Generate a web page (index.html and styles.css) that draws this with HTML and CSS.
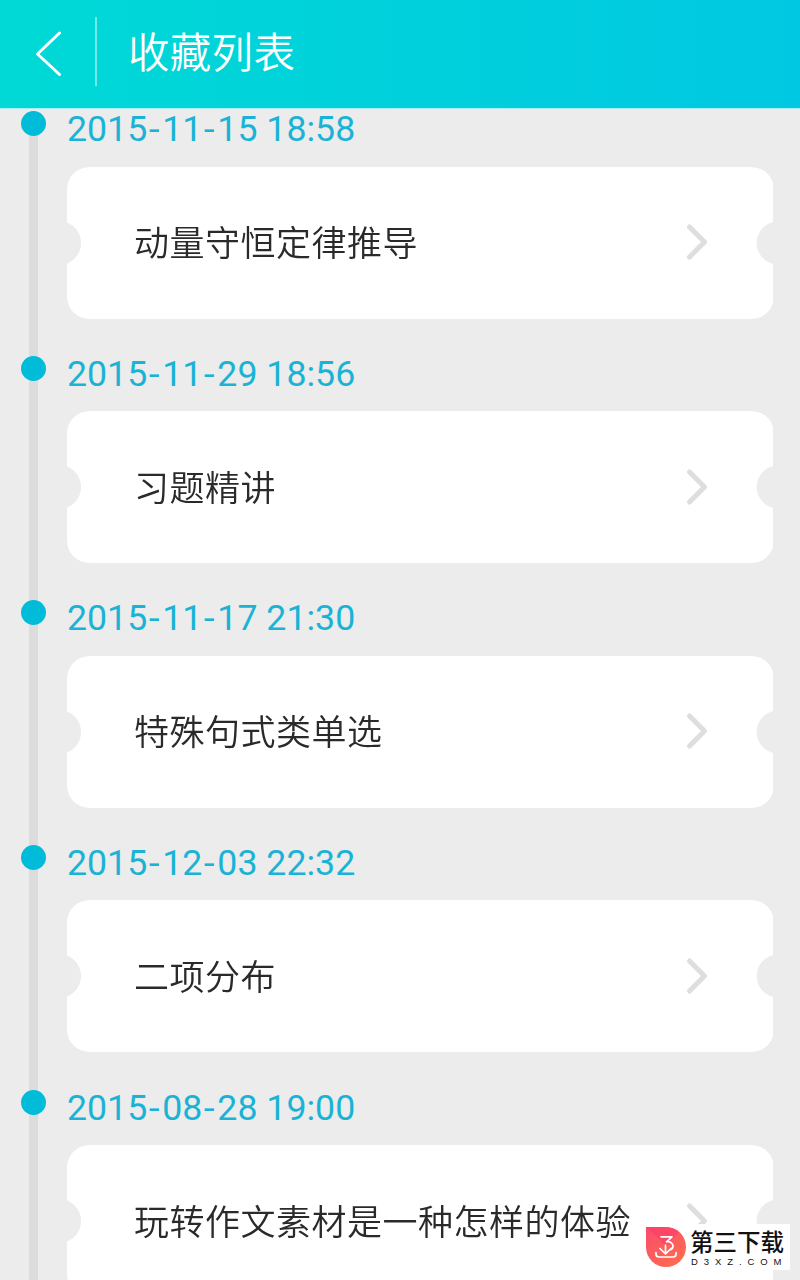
FILE: index.html
```html
<!DOCTYPE html>
<html lang="zh-CN">
<head>
<meta charset="utf-8">
<title>收藏列表</title>
<link rel="stylesheet" href="styles.css">
</head>
<body>
<div class="screen">
  <header class="bar">
    <svg class="back" width="28" height="48" viewBox="0 0 28 48"><path d="M25.500 5 3.500 26 25.500 46.500"/></svg>
    <span class="divider"></span>
    <h1 class="title">收藏列表</h1>
  </header>
  <main class="list">
    <section class="item">
      <div class="rail"><i class="dot"></i></div>
      <div class="entry">
        <time class="date">2015<span class="dash">-</span>11<span class="dash">-</span>15 18:58</time>
        <a class="card"><span class="name">动量守恒定律推导</span><svg class="chevron" width="24" height="38" viewBox="0 0 24 38"><path d="M4.500 4 19.500 19 4.500 34"/></svg></a>
      </div>
    </section>
    <section class="item">
      <div class="rail"><i class="dot"></i></div>
      <div class="entry">
        <time class="date">2015<span class="dash">-</span>11<span class="dash">-</span>29 18:56</time>
        <a class="card"><span class="name">习题精讲</span><svg class="chevron" width="24" height="38" viewBox="0 0 24 38"><path d="M4.500 4 19.500 19 4.500 34"/></svg></a>
      </div>
    </section>
    <section class="item">
      <div class="rail"><i class="dot"></i></div>
      <div class="entry">
        <time class="date">2015<span class="dash">-</span>11<span class="dash">-</span>17 21:30</time>
        <a class="card"><span class="name">特殊句式类单选</span><svg class="chevron" width="24" height="38" viewBox="0 0 24 38"><path d="M4.500 4 19.500 19 4.500 34"/></svg></a>
      </div>
    </section>
    <section class="item">
      <div class="rail"><i class="dot"></i></div>
      <div class="entry">
        <time class="date">2015<span class="dash">-</span>12<span class="dash">-</span>03 22:32</time>
        <a class="card"><span class="name">二项分布</span><svg class="chevron" width="24" height="38" viewBox="0 0 24 38"><path d="M4.500 4 19.500 19 4.500 34"/></svg></a>
      </div>
    </section>
    <section class="item">
      <div class="rail"><i class="dot"></i></div>
      <div class="entry">
        <time class="date">2015<span class="dash">-</span>08<span class="dash">-</span>28 19:00</time>
        <a class="card"><span class="name">玩转作文素材是一种怎样的体验</span><svg class="chevron" width="24" height="38" viewBox="0 0 24 38"><path d="M4.500 4 19.500 19 4.500 34"/></svg></a>
      </div>
    </section>
  </main>
  <aside class="badge">
    <svg class="logo" width="40" height="40" viewBox="0 0 40 40">
      <defs><linearGradient id="g" x1="0" y1="0" x2=".7" y2="1"><stop offset="0" stop-color="#f84c6c"/><stop offset="1" stop-color="#ff6b50"/></linearGradient></defs>
      <path d="M0 0H20A20 20 0 1 1 0 20Z" fill="url(#g)"/>
      <path d="M0 0H20Q27 0 33 5L20 19Z" fill="#ff3d68" opacity=".65"/>
      <path class="mark" d="M15 9.800H26L20.500 14.800C24.500 14.300 27.300 16.500 27 19.500Q26.500 22.300 23.800 22.800M19.500 18V26.500M14 21.500 19.500 27 25 21.500M10 25.500V27Q10 30 13 30H27Q30 30 30 27V25.500"/>
    </svg>
    <div class="brand"><b class="brand-name">第三下载</b><span class="brand-url">D3XZ.COM</span></div>
  </aside>
</div>
</body>
</html>
```
FILE: styles.css
```css
* { box-sizing: border-box; }
body { margin: 0; font-family: Roboto, "Noto Sans CJK SC", sans-serif; }
.screen { position: relative; width: 800px; height: 1280px; overflow: hidden; background: #ececec; display: flex; flex-direction: column; }
.bar { flex: none; height: 109px; display: flex; align-items: flex-start; background: linear-gradient(90deg, #00d9d6, #00c8e2); border-bottom: 1px solid #a8edf2; }
.back { margin: 28px 0 0 34px; fill: none; stroke: #fff; stroke-width: 3; stroke-linecap: round; stroke-linejoin: round; }
.divider { width: 2px; height: 69px; margin: 17px 0 0 33px; background: #70e9e9; }
.title { margin: 19px 0 0 31px; font: 350 41.500px/62px "Noto Sans CJK SC", sans-serif; letter-spacing: .3px; color: #fff; }
.list { flex: none; }
.item { display: flex; height: 244.670px; }
.rail { width: 67px; padding: 2px 0 0 21px; background: linear-gradient(#dcdcdc, #dcdcdc) 29px 0 / 9px 100% no-repeat; }
.item:first-child .rail { background-position: 29px 14px; }
.dot { display: block; width: 25px; height: 25px; border-radius: 50%; background: #00bcd9; }
.entry { width: 706.500px; }
.date { display: block; height: 57.500px; line-height: 41px; font-size: 35.700px; color: #1ab3d6; white-space: pre; }
.dash { display: inline-block; width: 15px; text-align: center; transform: scaleX(1.1); }
.card { display: flex; align-items: center; justify-content: space-between; height: 152px; padding: 0 65px 0 67px; border-radius: 22px;
  background: #fff;
  mask: radial-gradient(circle at -8px 50%, transparent 21.500px, #000 22.500px) left / 50% 100% no-repeat, radial-gradient(circle at calc(100% + 5px) 50%, transparent 21px, #000 22px) right / 50.100% 100% no-repeat; }
.name { margin-top: -3px; font: 350 35px/52px "Noto Sans CJK SC", sans-serif; letter-spacing: .5px; color: #2a2a2a; white-space: nowrap; }
.chevron { flex: none; margin-top: -1px; fill: none; stroke: #dedede; stroke-width: 5; stroke-linecap: round; stroke-linejoin: round; }
.badge { position: absolute; left: 645px; top: 1224px; width: 145px; height: 46px; display: flex; background: #fff; border-radius: 20px 0 0 20px; }
.logo { margin: 3px 0 0 1px; }
.mark { fill: none; stroke: #fff; stroke-width: 1.700; stroke-linecap: round; stroke-linejoin: round; }
.brand { display: flex; flex-direction: column; margin-left: 4px; color: #111; }
.brand-name { margin-top: 2px; font: 500 23.500px/30px "Noto Sans CJK SC", sans-serif; white-space: nowrap; }
.brand-url { margin: 1px 0 0 1px; font: 400 9.500px/9px "Liberation Sans", sans-serif; letter-spacing: 5.900px; white-space: nowrap; }
```
